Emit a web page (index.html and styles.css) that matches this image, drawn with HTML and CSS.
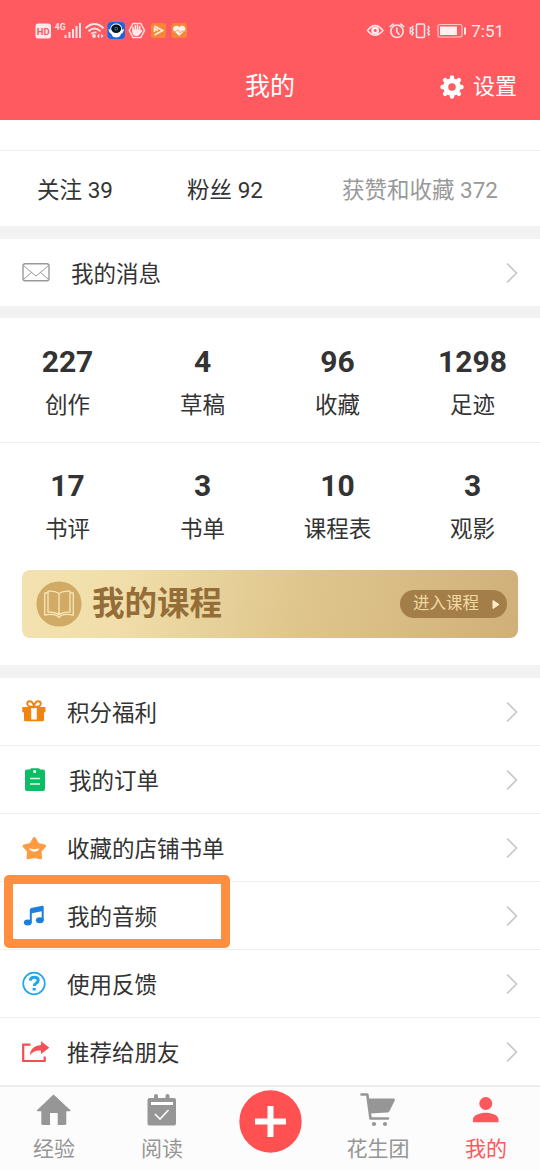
FILE: index.html
```html
<!DOCTYPE html>
<html lang="zh-CN">
<head>
<meta charset="utf-8">
<title>我的</title>
<link rel="stylesheet" href="styles.css">
</head>
<body>
<div class="app">
  <header class="header">
    <div class="status">
      <svg class="status-left" viewBox="34 18 156 24" width="156" height="24">
        <rect x="35.500" y="23.500" width="15.500" height="15" rx="2.500" fill="#ffe9ea"/>
        <text x="43.200" y="34.500" class="hd">HD</text>
        <text x="60.200" y="30" class="net">4G</text>
        <g fill="#ffe3e4">
          <rect x="64.500" y="35" width="2" height="3"/><rect x="68.500" y="32" width="2" height="6"/><rect x="72" y="29" width="2" height="9"/><rect x="75.500" y="26" width="2" height="12"/><rect x="79" y="23" width="2" height="15"/>
          <circle cx="94" cy="36" r="1.900"/>
          <path d="M97 36l2.300-2.500v5zM103.500 36l-2.300-2.500v5z"/>
        </g>
        <g fill="none" stroke="#ffe3e4" stroke-width="1.900">
          <path d="M85.500 28.200Q94.500 20 103.500 28.200M88.500 31.200Q94.500 25.800 100.500 31.200M91.200 33.800Q94 31.800 96.500 32.600"/>
        </g>
        <rect x="107.500" y="22" width="17.500" height="17" rx="4" fill="#1768e0"/>
        <path d="M108.500 29l3 1h9.500l3-1q-.5 4-3 5-1 3.500-4.800 3.500T111.500 34q-2.500-1-3-5z" fill="#fff"/>
        <ellipse cx="116.200" cy="28.500" rx="5.800" ry="5" fill="#fff"/>
        <ellipse cx="116.200" cy="28.700" rx="5" ry="4.200" fill="#071522"/>
        <circle cx="116.200" cy="28.700" r="1.400" fill="none" stroke="#37a09b" stroke-width=".8"/>
        <path d="M133 23.500h7.800l3.700 7-3.700 7H133l-3.700-7z" fill="none" stroke="#ffe0e1" stroke-width="1.500"/>
        <path d="M133 30.500v-3M135.300 30v-4.300M137.500 30v-4.800M139.700 30v-3.500M139.800 33l1.700-2.300" stroke="#ffe9ea" stroke-width="1.600" stroke-linecap="round"/>
        <path d="M132.300 29.500h8.200v3.500q-1 3-4.100 3t-4.100-3z" fill="#ffe9ea"/>
        <rect x="151" y="23" width="15" height="15" rx="2.500" fill="#f8853a"/>
        <path d="M154.500 26l8.200 4.500-8.200 4.500M154.500 32v-3.500l3.500 2" fill="none" stroke="#fff0da" stroke-width="1.700"/>
        <rect x="171.500" y="23" width="15.500" height="15" rx="2.500" fill="#f8853a"/>
        <path d="M179.200 36l-5.700-5.500c-2-3.500 3-6.500 5.700-3.300 2.700-3.200 7.700-.2 5.700 3.300z" fill="#fff3e6"/>
        <path d="M172 31.700h4l1.700-2 2.500 3.300 1.500-1.800h5.300" fill="none" stroke="#f6a168" stroke-width="1"/>
      </svg>
      <div class="status-right">
        <svg viewBox="367 18 102 24" width="102" height="24" fill="none" stroke="#ffe9ea" stroke-width="1.500">
          <path d="M368.500 30.500Q376 20.500 384 30.500 376 40 368.500 30.500z"/>
          <circle cx="376.200" cy="30.500" r="2.700" stroke-width="2.400"/>
          <circle cx="398" cy="31.300" r="6.200"/>
          <path d="M397.800 27.500v4.300l2.700 3M390.700 27l4-3.300M405.300 27l-4-3.300"/>
          <rect x="417.500" y="24" width="8" height="13.500" rx="1.200"/>
          <path d="M414.300 26l-1.600 1.800 1.600 1.700-1.600 1.800 1.600 1.700-1.600 1.500 1.300 1M411.300 27v7M428.700 26l1.600 1.800-1.600 1.700 1.600 1.800-1.600 1.700 1.600 1.500-1.300 1" stroke-width="1.300"/>
          <rect x="439" y="24.500" width="24" height="12.500" rx="2" stroke-width="1.200" stroke="#ffc5c8"/>
          <rect x="441" y="26.500" width="17" height="8.500" fill="#ffeff0" stroke="none"/>
          <path d="M466 27.500v7" stroke-width="2"/>
        </svg>
        <span class="clock">7:51</span>
      </div>
    </div>
    <div class="nav">
      <span></span>
      <h1 class="title">我的</h1>
      <div class="settings">
        <svg viewBox="-12 -12 24 24" width="24" height="24">
          <g fill="none" stroke="#fff">
            <circle r="6.300" stroke-width="5"/>
            <path d="M0-8v-1.500M0 8v1.500M-8 0h-1.500M8 0h1.500M5.900-5.900l1-1M5.900 5.900l1 1M-5.900 5.900l-1 1M-5.900-5.900l-1-1" stroke-width="4.400" stroke-linecap="round"/>
          </g>
        </svg>
        <span>设置</span>
      </div>
    </div>
  </header>

  <main class="content">
    <section class="social">
      <span>关注 39</span><span>粉丝 92</span><span class="muted">获赞和收藏 372</span>
    </section>
    <section class="row message">
      <svg class="row-icon" viewBox="0 239 71 67" width="71" height="67" fill="none" stroke="#999" stroke-width="1.400">
        <rect x="23" y="263.700" width="26" height="17" rx="2.200"/>
        <path d="M23.500 265.500l8 7M48.500 265.500l-8 7M30.500 271.500l5.500 4.500 5.500-4.500M24 279l7.500-6.500M48 279l-7.500-6.500" stroke-width="1"/>
      </svg>
      <span class="row-label">我的消息</span>
      <svg class="chevron" viewBox="0 0 14 22" width="14" height="22"><path d="M2 1.500L11.500 11 2 20.500"/></svg>
    </section>
    <section class="stats">
      <div class="stat"><b>227</b><span>创作</span></div>
      <div class="stat"><b>4</b><span>草稿</span></div>
      <div class="stat"><b>96</b><span>收藏</span></div>
      <div class="stat"><b>1298</b><span>足迹</span></div>
    </section>
    <section class="stats stats-second">
      <div class="stat"><b>17</b><span>书评</span></div>
      <div class="stat"><b>3</b><span>书单</span></div>
      <div class="stat"><b>10</b><span>课程表</span></div>
      <div class="stat"><b>3</b><span>观影</span></div>
    </section>
    <section class="course-wrap">
      <div class="course">
        <svg viewBox="0 0 46 46" width="46" height="46">
          <circle cx="23" cy="23" r="22.600" fill="#d1aa66"/>
          <g fill="none" stroke="#f9e7b8" stroke-width="1.300" stroke-linejoin="round">
            <path d="M23 12.500q-4-3-11-2.300v21q7-.7 11 2.600 4-3.300 11-2.600v-21q-7-.7-11 2.300zV33.500"/>
            <path d="M11.500 12H8.700v22q8-1.500 12 .5l2.300 2 2.300-2q4-2 12-.5V12h-2.800"/>
          </g>
        </svg>
        <strong class="course-title">我的课程</strong>
        <span class="enter">进入课程<svg viewBox="0 0 8 11" width="8" height="11"><path d="M1 1.500v8L7 5.500z" fill="#ffedc4" stroke="#ffedc4" stroke-linejoin="round"/></svg></span>
      </div>
    </section>

    <section class="menu">
      <div class="row">
        <svg class="row-icon" viewBox="0 678 67 67" width="67" height="67">
          <path d="M22.300 707h23.200v5.300H44V720q0 1.300-1.300 1.300H25.300Q24 721.300 24 720v-7.700h-1.700z" fill="#ef8410"/>
          <path d="M31.200 708h5.600v11.500h-5.600z" fill="#fff"/>
          <path d="M34 707q-6.800 0-6.800-3.200 0-2.500 2.600-2.500 2.700 0 4.200 4.700 1.500-4.700 4.200-4.700 2.600 0 2.600 2.500Q40.800 707 34 707" fill="none" stroke="#ef8410" stroke-width="1.900"/>
        </svg>
        <span class="row-label">积分福利</span>
        <svg class="chevron" viewBox="0 0 14 22" width="14" height="22"><path d="M2 1.500L11.500 11 2 20.500"/></svg>
      </div>
      <div class="row">
        <svg class="row-icon" viewBox="0 746 69 67" width="69" height="67">
          <path d="M27 769.500h3l1-1.200h8l1 1.200h3q2 0 2 2V789q0 2-2 2H27q-2 0-2-2v-17.500q0-2 2-2z" fill="#0bbd64"/>
          <circle cx="34.700" cy="771.500" r="1.500" fill="#fff"/>
          <path d="M30 778.500h10M30 784h10" stroke="#e2faec" stroke-width="1.500"/>
        </svg>
        <span class="row-label">我的订单</span>
        <svg class="chevron" viewBox="0 0 14 22" width="14" height="22"><path d="M2 1.500L11.500 11 2 20.500"/></svg>
      </div>
      <div class="row">
        <svg class="row-icon" viewBox="0 814 67 67" width="67" height="67">
          <path d="M34.300 838.500l3.500 6 6.700 1.500-4.600 5.200.7 6.500-6.300-1.200-6.300 1.200.7-6.500-4.600-5.200 6.700-1.500z" fill="#fd9b41" stroke="#fd9b41" stroke-width="3" stroke-linejoin="round"/>
          <path d="M29.500 849q4.800 4.500 9.600 0-4.800 1.400-9.600 0z" fill="#fff" stroke="#fff" stroke-width="1" stroke-linejoin="round"/>
        </svg>
        <span class="row-label">收藏的店铺书单</span>
        <svg class="chevron" viewBox="0 0 14 22" width="14" height="22"><path d="M2 1.500L11.500 11 2 20.500"/></svg>
      </div>
      <div class="row marked">
        <svg class="row-icon" viewBox="0 882 67 67" width="67" height="67" fill="#1a7fdd">
          <ellipse cx="27.800" cy="922.500" rx="3.900" ry="3"/>
          <ellipse cx="39.800" cy="920.200" rx="3.900" ry="3"/>
          <path d="M29.800 922.500v-12.700q0-1.500 1.500-1.900l11-2.200q1.400-.2 1.400 1.200v13.300h-2v-8.900l-9.900 2v9.200z"/>
        </svg>
        <span class="row-label">我的音频</span>
        <svg class="chevron" viewBox="0 0 14 22" width="14" height="22"><path d="M2 1.500L11.500 11 2 20.500"/></svg>
        <i class="marker"></i>
      </div>
      <div class="row">
        <svg class="row-icon" viewBox="0 950 67 67" width="67" height="67" fill="none" stroke="#21a5ec">
          <circle cx="34" cy="983.500" r="10.800" stroke-width="1.700"/>
          <path d="M30.200 980.700q.3-3.400 4.100-3.400 3.900 0 3.900 3 0 1.700-2 2.900-1.900 1.100-1.900 2.700" stroke-width="3"/>
          <path d="M32.600 989.200h3.200" stroke-width="2.600"/>
        </svg>
        <span class="row-label">使用反馈</span>
        <svg class="chevron" viewBox="0 0 14 22" width="14" height="22"><path d="M2 1.500L11.500 11 2 20.500"/></svg>
      </div>
      <div class="row">
        <svg class="row-icon" viewBox="0 1018 67 67" width="67" height="67">
          <path d="M30.500 1044.700h-7.300v16.300h21.500v-4.500" fill="none" stroke="#ee5054" stroke-width="2.200"/>
          <path d="M41 1041.300l8.300 6.500-8.300 6.200v-3.500q-7-.7-11.300 5 .5-9.700 11.300-10.600z" fill="#f55055"/>
        </svg>
        <span class="row-label">推荐给朋友</span>
        <svg class="chevron" viewBox="0 0 14 22" width="14" height="22"><path d="M2 1.500L11.500 11 2 20.500"/></svg>
      </div>
    </section>
  </main>

  <nav class="tabs">
    <div class="tab">
      <svg viewBox="34 1090 40 40" width="40" height="40"><path d="M53.500 1094.500L37 1110.300v1h4.300v12.200q0 1.500 1.500 1.500H50v-12h7.700v12h7.100q1.500 0 1.500-1.500v-12.200h4.200v-1z" fill="#969696"/></svg>
      <span>经验</span>
    </div>
    <div class="tab">
      <svg viewBox="142 1090 40 40" width="40" height="40">
        <path d="M149.500 1098h4.500v-2q0-2 2-2t2 2v2h7.500v-2q0-2 2-2t2 2v2h4.500q2 0 2 2v23.500q0 2-2 2h-24.500q-2 0-2-2V1100q0-2 2-2z" fill="#969696"/>
        <path d="M151 1102h22v3h-22z" fill="#fff"/>
        <path d="M155 1114l5 5 8.500-9" fill="none" stroke="#fff" stroke-width="1.600"/>
      </svg>
      <span>阅读</span>
    </div>
    <div class="tab plus">
      <svg viewBox="-31.500 -31.500 63 63" width="63" height="63"><circle r="31.200" fill="#ff5052"/><path d="M-15.500 0h31M0-15.500v31" stroke="#fff" stroke-width="6"/></svg>
    </div>
    <div class="tab">
      <svg viewBox="358 1090 40 40" width="40" height="40">
        <path d="M361.500 1094.500h5.800l3.200 24H388" fill="none" stroke="#969696" stroke-width="2.600" stroke-linecap="round" stroke-linejoin="round"/>
        <path d="M368 1098.500h26q1.500.3.800 2l-5.300 10.500q-.7 1.500-2.300 1.600l-17.200.8z" fill="#969696"/>
        <circle cx="374" cy="1124" r="2.100" fill="#969696"/><circle cx="385" cy="1124" r="2.100" fill="#969696"/>
      </svg>
      <span>花生团</span>
    </div>
    <div class="tab active">
      <svg viewBox="466 1090 40 40" width="40" height="40" fill="#fc585d"><circle cx="485.800" cy="1103.500" r="6.500"/><path d="M473 1122.300v-3.300c0-4 7.500-6.300 12.800-6.300s12.700 2.300 12.700 6.300v3.300z"/></svg>
      <span>我的</span>
    </div>
  </nav>
</div>
</body>
</html>
```

FILE: styles.css
```css
* { box-sizing: border-box; }
body {
  margin: 0;
  font-family: Roboto, "Noto Sans CJK SC", sans-serif;
  color: #333;
  background: #fff;
}
svg { display: block; flex: none; }
.app {
  width: 540px;
  height: 1170px;
  display: flex;
  flex-direction: column;
  overflow: hidden;
}

.header { height: 120px; flex: none; background: #ff5a60; color: #fff; }
.status {
  height: 60px;
  padding: 0 36px 0 34px;
  display: flex;
  align-items: center;
  justify-content: space-between;
}
.status-right { display: flex; align-items: center; gap: 3px; }
.clock { font-size: 17px; line-height: 24px; color: #ffecec; padding-top: 2px; }
.hd { font: bold 9.500px Roboto, sans-serif; fill: #f8595f; text-anchor: middle; }
.net { font: bold 8.500px Roboto, sans-serif; fill: #ffe3e4; text-anchor: middle; }
.nav {
  height: 54px;
  padding-right: 23px;
  display: grid;
  grid-template-columns: 1fr auto 1fr;
  align-items: center;
}
.title { margin: 0 0 0 23px; font-size: 25px; font-weight: 400; line-height: 36px; }
.settings {
  display: flex;
  align-items: center;
  justify-content: flex-end;
  gap: 9px;
  font-size: 22px;
  line-height: 32px;
}

.content { flex: 1; min-height: 0; padding-top: 30px; }
.social {
  height: 76px;
  border-top: 1px solid #eee;
  display: grid;
  grid-template-columns: 150px 150px 240px;
  align-items: center;
  text-align: center;
  font-size: 22.500px;
  line-height: 32px;
  padding-top: 2px;
}
.muted { color: #999; }

.row {
  position: relative;
  height: 68px;
  padding-right: 21px;
  display: flex;
  align-items: center;
  border-bottom: 1px solid #eee;
}
.row-label { flex: 1; font-size: 22.500px; line-height: 32px; padding-top: 2px; }
.chevron { fill: none; stroke: #c8c8c8; stroke-width: 1.700; }
.message {
  height: 92px;
  border-top: 13px solid #f2f2f2;
  border-bottom: 12px solid #f2f2f2;
}

.stats {
  height: 125px;
  padding-top: 26px;
  display: grid;
  grid-template-columns: repeat(4, 1fr);
  border-bottom: 1px solid #eee;
}
.stats-second { height: 127px; border: 0; padding-top: 25px; }
.stat { display: flex; flex-direction: column; align-items: center; gap: 8px; }
.stat b { font-size: 30px; line-height: 36px; }
.stat span { font-size: 22.500px; line-height: 34px; }

.course-wrap { height: 95px; padding: 0 22px; }
.course {
  height: 68px;
  padding: 0 11px 0 14px;
  display: flex;
  align-items: center;
  border-radius: 8px;
  background: linear-gradient(100deg, #f3e2b0 0%, #f1deaa 20%, #dfc68d 55%, #d0b078 100%);
}
.course-title { flex: 1; margin-left: 10px; font-size: 32.500px; line-height: 44px; color: #946d37; }
.enter {
  width: 107px;
  height: 28px;
  padding: 0 7px 0 13px;
  display: flex;
  align-items: center;
  justify-content: space-between;
  border-radius: 14px;
  background: #a37e48;
  color: #f2d9a3;
  font-size: 16.500px;
  line-height: 28px;
}

.menu { border-top: 13px solid #f2f2f2; }
.marker {
  position: absolute;
  left: 4px;
  top: -7px;
  width: 226px;
  height: 73px;
  border: 9px solid #ff8e3e;
  border-radius: 5px;
}

.tabs {
  height: 85px;
  flex: none;
  display: grid;
  grid-template-columns: repeat(5, 1fr);
  background: #fcfcfc;
  border-top: 2px solid #ececec;
}
.tab {
  display: flex;
  flex-direction: column;
  align-items: center;
  padding-top: 3px;
  gap: 4px;
  font-size: 21px;
  line-height: 30px;
  color: #969696;
}
.tab.active { color: #fc585d; }
```
